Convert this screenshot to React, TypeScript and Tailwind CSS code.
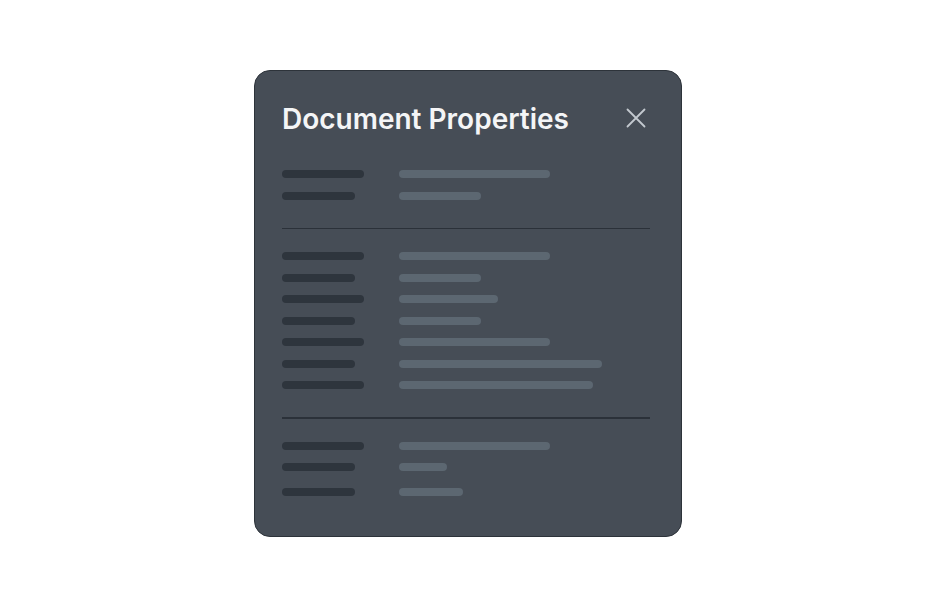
import React from 'react'

type Row = { label: number; value: number; gap?: string }

const sections: Row[][] = [
    [
        { label: 82, value: 151 },
        { label: 73, value: 82 },
    ],
    [
        { label: 82, value: 151 },
        { label: 73, value: 82 },
        { label: 82, value: 99 },
        { label: 73, value: 82 },
        { label: 82, value: 151 },
        { label: 73, value: 203 },
        { label: 82, value: 194 },
    ],
    [
        { label: 82, value: 151 },
        { label: 73, value: 48 },
        { label: 73, value: 64, gap: 'mt-[17px]' },
    ],
]

function PropertyRow({ row, first }: { row: Row; first: boolean }) {
    return (
        <div className={`flex items-center ${first ? '' : row.gap ?? 'mt-[13.5px]'}`}>
            <div className="w-[117px] shrink-0">
                <div className="h-2 rounded-full bg-[#2e353d]" style={{ width: row.label }} />
            </div>
            <div className="h-2 rounded-full bg-[#5c6771]" style={{ width: row.value }} />
        </div>
    )
}

export default function App() {
    return (
        <div className="h-[612px] w-full bg-white flex justify-center pt-[70px] font-['Inter',sans-serif]">
            <div className="w-[428px] h-fit rounded-[16px] border-[1.5px] border-[#2d333a] bg-[#464d56] pl-[27px] pr-[31px] pt-[31px] pb-10">
                {/* header */}
                <div className="flex items-center justify-between h-8">
                    <h1 className="text-[28px] leading-8 font-semibold text-[#f4f5f6] pt-[1px]">
                        Document Properties
                    </h1>
                    <button className="w-6 h-6 flex items-center justify-center text-[#c3c9cf] mr-[2px]">
                        <svg className="w-6 h-6" viewBox="0 0 24 24" fill="none" stroke="currentColor" strokeWidth={1.8} strokeLinecap="round">
                            <path d="M3.5 3.5l17 17M20.5 3.5l-17 17" />
                        </svg>
                    </button>
                </div>

                {sections.map((rows, i) => (
                    <div key={i}>
                        {i > 0 && <div className="mt-7 h-[1.5px] bg-[#2b3139]" />}
                        <div className={i === 0 ? 'mt-9' : 'mt-[23px]'}>
                            {rows.map((row, j) => (
                                <PropertyRow key={j} row={row} first={j === 0} />
                            ))}
                        </div>
                    </div>
                ))}
            </div>
        </div>
    )
}
